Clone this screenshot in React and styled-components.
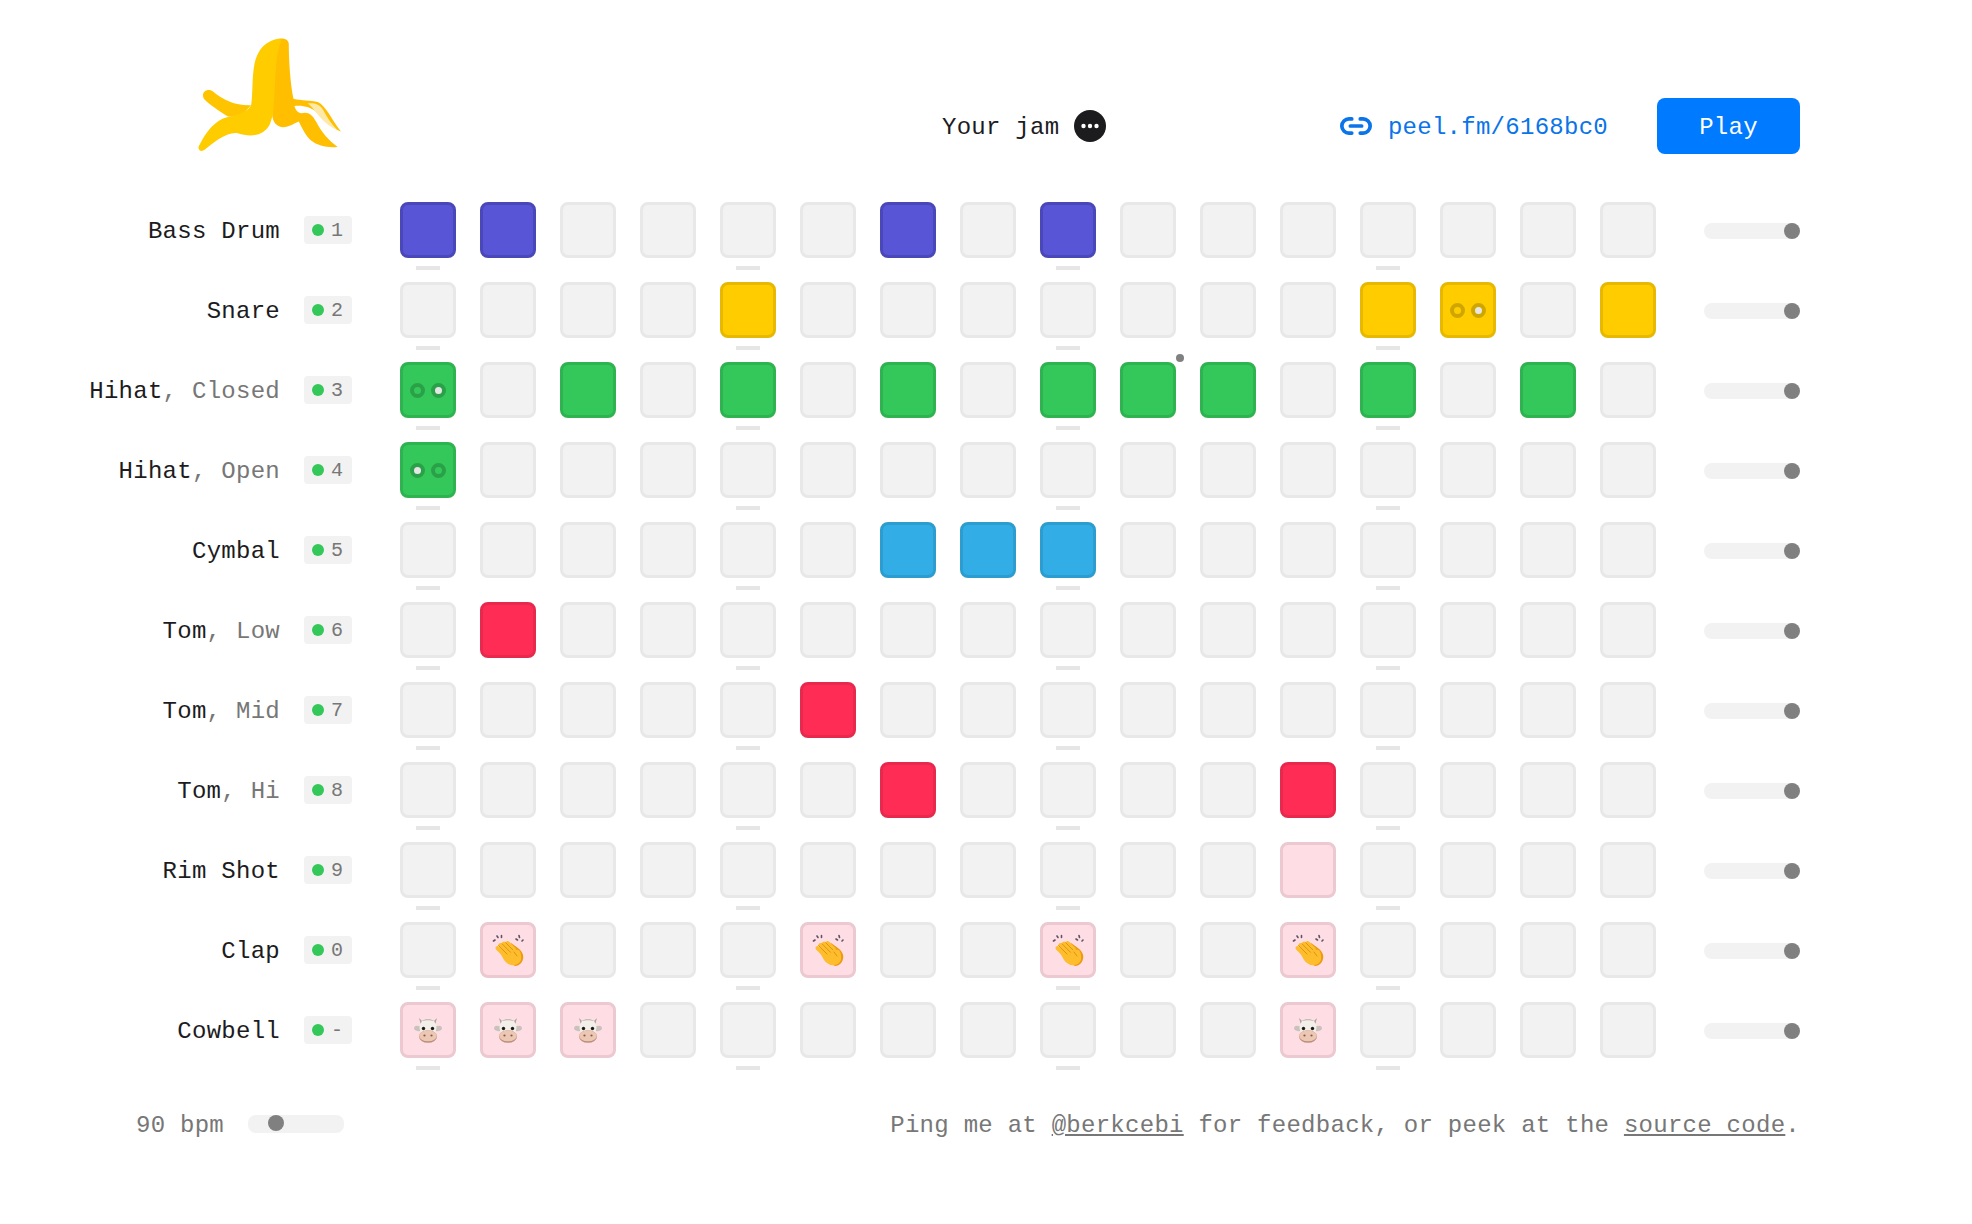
import React from 'react'
import styled, { createGlobalStyle } from 'styled-components'
import { Link2 } from 'lucide-react'

const GlobalStyle = createGlobalStyle`
  html, body {
    margin: 0;
    padding: 0;
    background: #fff;
  }
  body {
    font-family: 'Liberation Mono', monospace;
    font-size: 24px;
    letter-spacing: 0.27px;
    color: #1c1c1e;
  }
`

const colors = {
  purple: ['#5856d6', '#4a48b8'],
  yellow: ['#ffcc00', '#e6b800'],
  green: ['#34c759', '#2fb350'],
  cyan: ['#32ade6', '#2d9ccf'],
  red: ['#ff2d55', '#e6294d'],
  pink: ['#ffdde4', '#ecc8d0'],
}

const Page = styled.div`
  width: 1972px;
  height: 1224px;
  box-sizing: border-box;
  padding: 38px 172px 0 88px;
`

const Header = styled.header`
  display: flex;
  align-items: flex-end;
  height: 116px;
  margin-bottom: 48px;
`

const Logo = styled.svg`
  width: 143px;
  height: 114px;
  margin-left: 110px;
  margin-bottom: 2px;
  flex: none;
`

const Jam = styled.div`
  display: flex;
  align-items: center;
  gap: 15px;
  height: 56px;
  margin-left: 601px;

  span {
    padding-top: 2px;
  }
`

const LinkRow = styled.a`
  display: flex;
  align-items: center;
  gap: 15px;
  height: 56px;
  margin-left: auto;
  color: #0a74e8;

  span {
    padding-top: 2px;
  }
`

const PlayButton = styled.button`
  width: 143px;
  height: 56px;
  margin-left: 49px;
  padding: 2px 0 0;
  border: 0;
  border-radius: 8px;
  background: #007aff;
  color: #fff;
  font: inherit;
  letter-spacing: inherit;
`

const Rows = styled.div`
  display: flex;
  flex-direction: column;
  gap: 24px;
`

const Row = styled.div`
  display: flex;
  align-items: center;
  height: 56px;
`

const Label = styled.div`
  width: 192px;
  flex: none;
  text-align: right;
  white-space: nowrap;
  padding-top: 2px;

  span {
    color: #777;
  }
`

const Badge = styled.div`
  display: flex;
  align-items: center;
  gap: 7px;
  box-sizing: border-box;
  width: 48px;
  height: 28px;
  margin: 0 48px 0 24px;
  padding-left: 8px;
  flex: none;
  border-radius: 4px;
  background: #f2f2f2;
  color: #777;
  font-size: 20px;
  letter-spacing: 0;
`

const Led = styled.i`
  width: 12px;
  height: 12px;
  border-radius: 50%;
  background: #34c759;
`

const Cells = styled.div`
  display: grid;
  grid-template-columns: repeat(16, 56px);
  gap: 24px;
`

const Cell = styled.div`
  position: relative;
  display: flex;
  align-items: center;
  justify-content: center;
  gap: 6px;
  box-sizing: border-box;
  width: 56px;
  height: 56px;
  border: 3px solid ${(p) => (p.$color ? colors[p.$color][1] : '#e8e8e8')};
  border-radius: 8px;
  background: ${(p) => (p.$color ? colors[p.$color][0] : '#f2f2f2')};

  ${(p) =>
    p.$beat &&
    `&::after {
      content: '';
      position: absolute;
      left: 13px;
      bottom: -15px;
      width: 24px;
      height: 4px;
      background: #e6e6e6;
    }`}
`

const Pad = styled.i`
  width: 15px;
  height: 15px;
  box-sizing: border-box;
  border: 4px solid ${(p) => colors[p.$color][1]};
  border-radius: 50%;
  background: ${(p) => (p.$on ? '#fff' : 'transparent')};
  filter: brightness(0.9);
`

const Pointer = styled.i`
  position: absolute;
  top: -11px;
  right: -11px;
  width: 8px;
  height: 8px;
  border-radius: 50%;
  background: #808080;
`

const Track = styled.div`
  position: relative;
  width: 96px;
  height: 16px;
  flex: none;
  border-radius: 8px;
  background: #f2f2f2;
`

const RowSlider = styled(Track)`
  margin: 2px 0 0 48px;
`

const Thumb = styled.i`
  position: absolute;
  top: 0;
  left: ${(p) => p.$left}px;
  width: 16px;
  height: 16px;
  border-radius: 50%;
  background: #808080;
`

const Footer = styled.footer`
  display: flex;
  align-items: center;
  justify-content: space-between;
  height: 48px;
  margin-top: 42px;
  color: #777;

  span, div {
    padding-top: 2px;
  }

  a {
    color: inherit;
    text-decoration: underline;
  }
`

const Tempo = styled.section`
  display: flex;
  align-items: center;
  gap: 24px;
  margin-left: 48px;
`

const fingers = ['M5.500 14L14 22.500', 'M8.500 11L17 19.500', 'M12 9.500L20 17.500', 'M15.500 9L22 15.500']

function ClapIcon() {
  return (
    <svg width="32" height="33" viewBox="0 0 32 33" role="img" aria-label="👏">
      <path fill="#eb9a12" d="M19 9L26 14C30 17 32 21 31 25C30 29 27 32 23 32L14 27Z" />
      <path fill="#fdbd2c" d="M7 17L18 10L24 16C27 15 29 18 29 22C30 27 27 30 23 31C19 32 15 30 12 26Z" />
      {fingers.map((d) => (
        <path key={d} d={d} fill="none" stroke="#fdbd2c" strokeWidth="4" strokeLinecap="round" />
      ))}
      <path
        fill="none"
        stroke="#dc8e12"
        strokeWidth="0.900"
        strokeLinecap="round"
        d="M6.500 11.500L15 20M10 9.800L18.500 18.300M13.800 8.800L20.800 15.800M22 18L25 22"
      />
      <path
        fill="none"
        stroke="#5b5566"
        strokeWidth="1.600"
        strokeLinecap="round"
        d="M1.500 7L3 6M5 2L6 3.500M9.500 1.500L9.500 3.500M24 5L25.500 6M27 1.500L27.500 3.500M30 7L31 6"
      />
    </svg>
  )
}

function CowIcon() {
  return (
    <svg width="28" height="26" viewBox="0 0 28 26" role="img" aria-label="🐮">
      <path fill="#a9a39c" d="M5 1L9 5L7 8ZM23 1L19 5L21 8Z" />
      <ellipse cx="4" cy="11.500" rx="4" ry="2.600" fill="#c9c2bb" transform="rotate(12 4 11.500)" />
      <ellipse cx="24" cy="11.500" rx="4" ry="2.600" fill="#c9c2bb" transform="rotate(-12 24 11.500)" />
      <ellipse cx="14" cy="10.500" rx="8.500" ry="9" fill="#f4eee9" />
      <path fill="#b4aaa2" d="M8 4C10 1.500 18 1.500 20 4C17 3 11 3 8 4Z" />
      <ellipse cx="14" cy="19.500" rx="9" ry="6.300" fill="#b98f7b" />
      <ellipse cx="14" cy="18.800" rx="8.800" ry="5.500" fill="#ecc8b4" />
      <circle cx="9.500" cy="11.500" r="1.700" fill="#1c1c1e" />
      <circle cx="18.500" cy="11.500" r="1.700" fill="#1c1c1e" />
      <ellipse cx="10.500" cy="18.500" rx="1.100" ry="0.900" fill="#8a5a48" />
      <ellipse cx="17.500" cy="18.500" rx="1.100" ry="0.900" fill="#8a5a48" />
    </svg>
  )
}

const tracks = [
  { name: 'Bass Drum', key: '1', color: 'purple', on: [0, 1, 6, 8] },
  { name: 'Snare', key: '2', color: 'yellow', on: [4, 12, 13, 15], pads: { 13: 1 } },
  { name: 'Hihat', sub: 'Closed', key: '3', color: 'green', on: [0, 2, 4, 6, 8, 9, 10, 12, 14], pads: { 0: 1 } },
  { name: 'Hihat', sub: 'Open', key: '4', color: 'green', on: [0], pads: { 0: 0 } },
  { name: 'Cymbal', key: '5', color: 'cyan', on: [6, 7, 8] },
  { name: 'Tom', sub: 'Low', key: '6', color: 'red', on: [1] },
  { name: 'Tom', sub: 'Mid', key: '7', color: 'red', on: [5] },
  { name: 'Tom', sub: 'Hi', key: '8', color: 'red', on: [6, 11] },
  { name: 'Rim Shot', key: '9', color: 'pink', on: [11] },
  { name: 'Clap', key: '0', color: 'pink', on: [1, 5, 8, 11], Icon: ClapIcon },
  { name: 'Cowbell', key: '-', color: 'pink', on: [0, 1, 2, 11], Icon: CowIcon },
]

const steps = Array.from({ length: 16 }, (_, i) => i)

function Banana() {
  return (
    <Logo viewBox="85 55 430 340">
      <path
        fill="#ffc400"
        d="M100 225C100 212 118 204 132 216C160 240 200 258 245 256L210 292L175 290C150 275 115 250 104 238C101 234 100 230 100 225Z"
      />
      <path
        fill="#ffbf00"
        d="M330 56C345 53 358 60 358 72C358 115 362 190 372 236C395 242 425 240 445 246C470 256 490 305 515 335C490 325 465 305 440 275C425 262 400 255 375 258C378 270 385 278 395 280C420 272 432 290 440 305C455 335 480 365 505 381C475 384 445 378 425 362C410 350 398 325 388 305C375 310 360 322 340 322C320 320 310 305 308 285L320 100Z"
      />
      <path fill="#ffe9a8" d="M415 250C435 248 450 252 460 268C475 295 490 318 505 330C480 322 458 300 442 280C435 270 425 258 415 250Z" />
      <path
        fill="#ffcc00"
        d="M330 55C290 60 264 88 255 130C247 170 250 222 245 254C240 270 210 285 175 291C130 302 105 345 87 380C84 392 95 397 105 390C130 370 170 335 205 340C240 352 280 350 300 315C312 290 312 260 315 220C318 170 318 110 332 72C334 65 336 58 330 55Z"
      />
    </Logo>
  )
}

function MoreIcon() {
  return (
    <svg width="32" height="32" viewBox="0 0 32 32">
      <circle cx="16" cy="16" r="16" fill="#1c1c1e" />
      <circle cx="9.500" cy="16" r="2.200" fill="#fff" />
      <circle cx="16" cy="16" r="2.200" fill="#fff" />
      <circle cx="22.500" cy="16" r="2.200" fill="#fff" />
    </svg>
  )
}

function TrackRow({ track, index }) {
  const { Icon } = track
  return (
    <Row>
      <Label>
        {track.name}
        {track.sub && <span>, {track.sub}</span>}
      </Label>
      <Badge>
        <Led />
        {track.key}
      </Badge>
      <Cells>
        {steps.map((step) => {
          const on = track.on.includes(step)
          const pad = track.pads ? track.pads[step] : undefined
          return (
            <Cell key={step} $color={on ? track.color : null} $beat={step % 4 === 0}>
              {on && Icon && <Icon />}
              {pad !== undefined && (
                <>
                  <Pad $color={track.color} $on={pad === 0} />
                  <Pad $color={track.color} $on={pad === 1} />
                </>
              )}
              {index === 2 && step === 9 && <Pointer />}
            </Cell>
          )
        })}
      </Cells>
      <RowSlider>
        <Thumb $left={80} />
      </RowSlider>
    </Row>
  )
}

export default function App() {
  return (
    <>
      <GlobalStyle />
      <Page>
        <Header>
          <Banana />
          <Jam>
            <span>Your jam</span>
            <MoreIcon />
          </Jam>
          <LinkRow>
            <Link2 size={34} strokeWidth={2.6} />
            <span>peel.fm/6168bc0</span>
          </LinkRow>
          <PlayButton>Play</PlayButton>
        </Header>
        <Rows>
          {tracks.map((track, index) => (
            <TrackRow key={track.key} track={track} index={index} />
          ))}
        </Rows>
        <Footer>
          <Tempo>
            <span>90 bpm</span>
            <Track>
              <Thumb $left={20} />
            </Track>
          </Tempo>
          <div>
            Ping me at <a>@berkcebi</a> for feedback, or peek at the <a>source code</a>.
          </div>
        </Footer>
      </Page>
    </>
  )
}
